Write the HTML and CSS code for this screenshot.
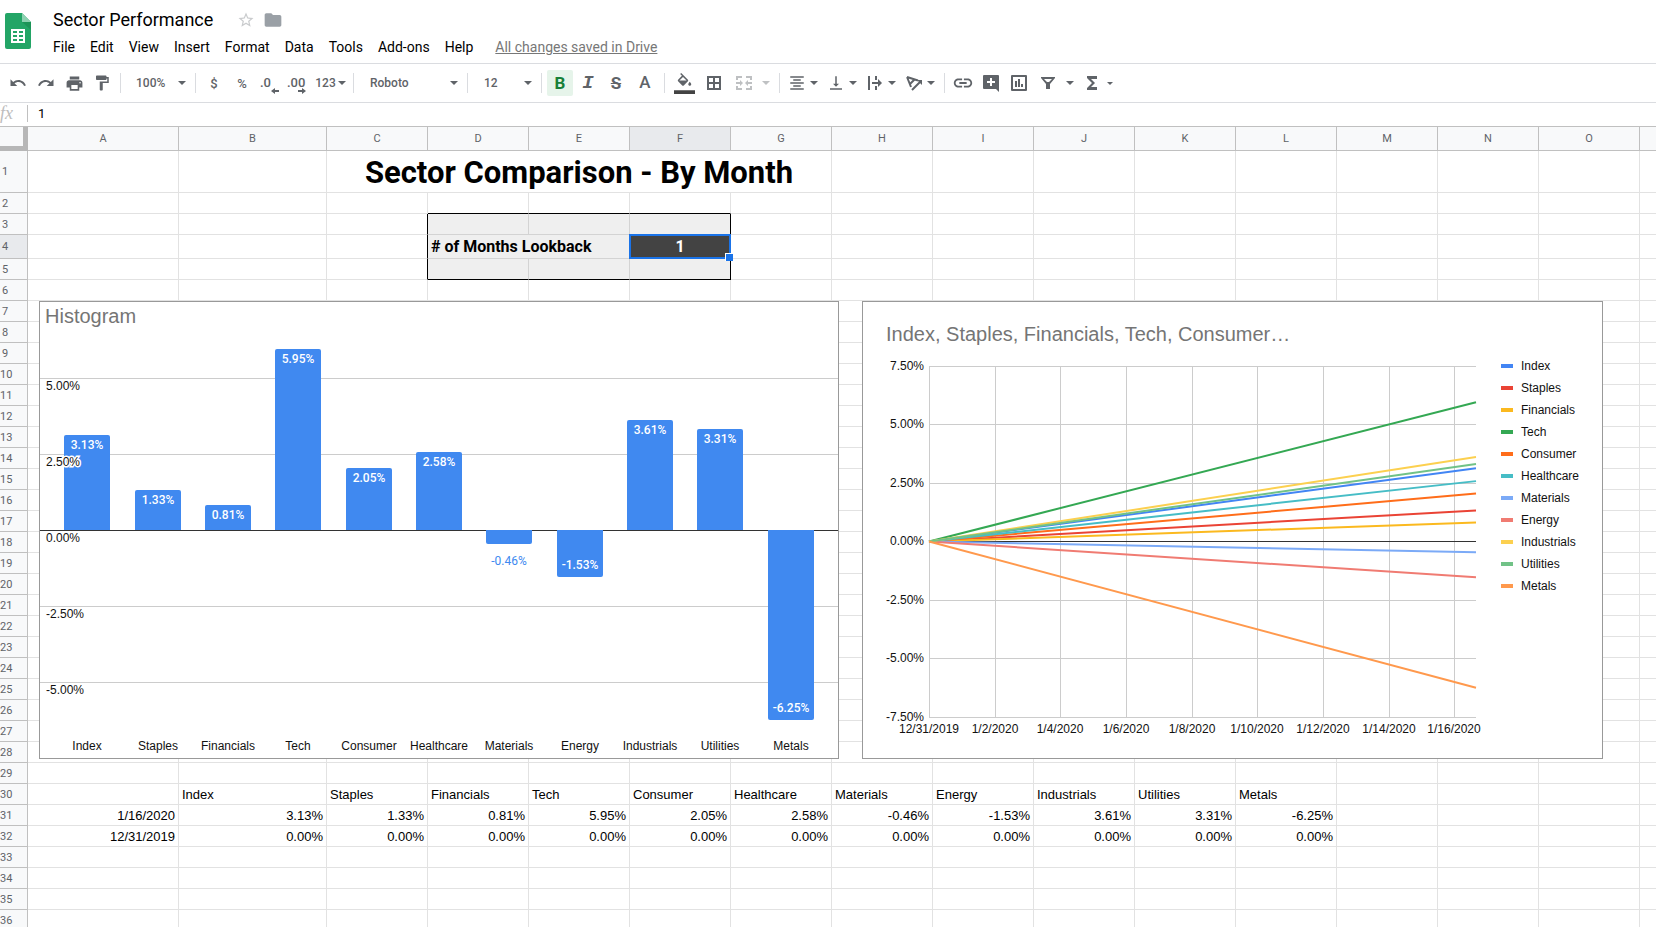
FILE: index.html
```html
<!DOCTYPE html>
<html lang="en">
<head>
    <meta charset="UTF-8">
    <meta name="viewport" content="width=device-width, initial-scale=1.0">
    <title>Sector Performance</title>
    <link rel="stylesheet" href="styles.css">
</head>
<body>
    <header class="doc-header">
        <svg class="doc-logo" viewBox="0 0 26 36" aria-hidden="true">
            <path d="M2 0h15l9 9v25a2 2 0 0 1-2 2H2a2 2 0 0 1-2-2V2a2 2 0 0 1 2-2z" fill="#23a566"/>
            <path d="M17 0l9 9h-9z" fill="#8ed1b1"/>
            <path d="M17 9h9v8z" fill="#1c9457"/>
            <path d="M6 16h14v14H6zM8 18v2h4v-2zM14 18v2h4v-2zM8 22v2h4v-2zM14 22v2h4v-2zM8 26v2h4v-2zM14 26v2h4v-2z" fill="#fff" fill-rule="evenodd"/>
        </svg>
        <div class="doc-info">
            <div class="doc-title-row">
                <h1 class="doc-title">Sector Performance</h1>
                <button class="title-btn" aria-label="Star">
                    <svg width="18" height="18" viewBox="0 0 24 24"><path fill="#c9cbcd" d="M22 9.24l-7.19-.62L12 2 9.19 8.63 2 9.24l5.46 4.73L5.82 21 12 17.27 18.18 21l-1.63-7.03L22 9.24zM12 15.4l-3.76 2.27 1-4.28-3.32-2.88 4.38-.38L12 6.1l1.71 4.04 4.38.38-3.32 2.88 1 4.28L12 15.4z"/></svg>
                </button>
                <button class="title-btn" aria-label="Move to folder">
                    <svg width="20" height="20" viewBox="0 0 24 24"><path fill="#9aa0a6" d="M10 4H4c-1.1 0-2 .9-2 2v12c0 1.1.9 2 2 2h16c1.1 0 2-.9 2-2V8c0-1.1-.9-2-2-2h-8l-2-2z"/></svg>
                </button>
            </div>
            <nav class="menu">
                <button>File</button>
                <button>Edit</button>
                <button>View</button>
                <button>Insert</button>
                <button>Format</button>
                <button>Data</button>
                <button>Tools</button>
                <button>Add-ons</button>
                <button>Help</button>
                <a class="save-state" href="#">All changes saved in Drive</a>
            </nav>
        </div>
    </header>

    <div class="toolbar" role="toolbar">
        <button class="tool" aria-label="Undo"><svg width="18" height="18" viewBox="0 0 24 24"><path d="M12.5 8c-2.65 0-5.05.99-6.9 2.6L2 7v9h9l-3.62-3.62c1.39-1.16 3.16-1.88 5.12-1.88 3.54 0 6.55 2.31 7.6 5.5l2.37-.78C21.08 11.03 17.15 8 12.5 8z"/></svg></button>
        <button class="tool" aria-label="Redo"><svg width="18" height="18" viewBox="0 0 24 24"><path d="M18.4 10.6C16.55 8.99 14.15 8 11.5 8c-4.65 0-8.58 3.03-9.96 7.22L3.9 16c1.05-3.19 4.05-5.5 7.6-5.5 1.95 0 3.73.72 5.12 1.88L13 16h9V7l-3.6 3.6z"/></svg></button>
        <button class="tool" aria-label="Print"><svg width="19" height="19" viewBox="0 0 24 24"><path d="M19 8H5c-1.66 0-3 1.34-3 3v6h4v4h12v-4h4v-6c0-1.66-1.34-3-3-3zm-3 11H8v-5h8v5zm3-7c-.55 0-1-.45-1-1s.45-1 1-1 1 .45 1 1-.45 1-1 1zm-1-9H6v4h12V3z"/></svg></button>
        <button class="tool" aria-label="Paint format"><svg width="18" height="18" viewBox="0 0 24 24"><path d="M18 4V3c0-.55-.45-1-1-1H5c-.55 0-1 .45-1 1v4c0 .55.45 1 1 1h12c.55 0 1-.45 1-1V6h1v4H9v11c0 .55.45 1 1 1h2c.55 0 1-.45 1-1v-9h8V4h-3z"/></svg></button>
        <span class="divider"></span>
        <span class="dropdown dropdown-zoom"><select aria-label="Zoom"><option>100%</option></select></span>
        <span class="divider"></span>
        <button class="tool" aria-label="Format as currency">$</button>
        <button class="tool" aria-label="Format as percent">%</button>
        <button class="tool" aria-label="Decrease decimal places">
            <svg width="24" height="24" viewBox="0 0 24 24"><text x="2" y="16">.0</text><path d="M13 20l4-3v2h4v2h-4v2z"/></svg>
        </button>
        <button class="tool" aria-label="Increase decimal places">
            <svg width="24" height="24" viewBox="0 0 24 24"><text x="1" y="16">.00</text><path d="M20 20l-4-3v2h-4v2h4v2z"/></svg>
        </button>
        <button class="tool tool-number" aria-label="More formats">123<span class="caret"></span></button>
        <span class="divider"></span>
        <span class="dropdown dropdown-font"><select aria-label="Font"><option>Roboto</option></select></span>
        <span class="divider"></span>
        <span class="dropdown dropdown-size"><select aria-label="Font size"><option>12</option></select></span>
        <span class="divider"></span>
        <button class="tool tool-bold active" aria-label="Bold">B</button>
        <button class="tool tool-italic" aria-label="Italic">I</button>
        <button class="tool tool-strike" aria-label="Strikethrough">S</button>
        <button class="tool tool-color" aria-label="Text color">A</button>
        <span class="divider"></span>
        <button class="tool tool-cell" aria-label="Fill color"><svg width="21" height="21" viewBox="0 0 28 28"><path transform="translate(2 0)" d="M16.56 8.94L7.62 0 6.21 1.41l2.38 2.38-5.15 5.15c-.59.59-.59 1.54 0 2.12l5.5 5.5c.29.29.68.44 1.06.44s.77-.15 1.06-.44l5.5-5.5c.59-.58.59-1.53 0-2.12zM5.21 10L10 5.21 14.79 10H5.21zM19 11.5s-2 2.17-2 3.5c0 1.1.9 2 2 2s2-.9 2-2c0-1.33-2-3.5-2-3.5z"/><path fill="#434343" d="M0 23h28v5H0z"/></svg></button>
        <button class="tool tool-cell" aria-label="Borders"><svg width="18" height="18" viewBox="0 0 18 18"><path d="M2 2h14v14H2zM4 4v4h4V4zM10 4v4h4V4zM4 10v4h4v-4zM10 10v4h4v-4z" fill-rule="evenodd"/></svg></button>
        <button class="tool-menu wide disabled" aria-label="Merge cells" disabled><svg width="18" height="18" viewBox="0 0 18 18"><path d="M1 2h6v2H3v2H1zM11 2h6v4h-2V4h-4zM1 12h2v2h4v2H1zM15 12h2v4h-6v-2h4zM1 8h4V6l3 3-3 3v-2H1zM17 8h-4V6l-3 3 3 3v-2h4z"/></svg><span class="caret"></span></button>
        <span class="divider"></span>
        <button class="tool-menu" aria-label="Horizontal align"><svg width="18" height="18" viewBox="0 0 24 24"><path d="M7 15v2h10v-2H7zm-4 6h18v-2H3v2zm0-8h18v-2H3v2zm4-6v2h10V7H7zM3 3v2h18V3H3z"/></svg><span class="caret"></span></button>
        <button class="tool-menu" aria-label="Vertical align"><svg width="18" height="18" viewBox="0 0 24 24"><path d="M16 13h-3V3h-2v10H8l4 4 4-4zM4 19v2h16v-2H4z"/></svg><span class="caret"></span></button>
        <button class="tool-menu" aria-label="Text wrapping"><svg width="18" height="18" viewBox="0 0 18 18"><path d="M2 2h2v14H2zM9 2h2v4H9zM9 12h2v4H9zM6 8h6V5l4 4-4 4v-3H6z"/></svg><span class="caret"></span></button>
        <button class="tool-menu" aria-label="Text rotation"><svg width="18" height="18" viewBox="0 0 18 18"><path fill="none" stroke="#5f6368" stroke-width="2" d="M2 3l11 3.500M2 3l4 10M9.500 5.500L5 10M7 16l8-8"/><path d="M12 6h5v5z"/></svg><span class="caret"></span></button>
        <span class="divider"></span>
        <button class="tool" aria-label="Insert link"><svg width="22" height="22" viewBox="0 0 24 24"><path d="M3.9 12c0-1.71 1.39-3.1 3.1-3.1h4V7H7c-2.76 0-5 2.24-5 5s2.24 5 5 5h4v-1.9H7c-1.71 0-3.1-1.39-3.1-3.1zM8 13h8v-2H8v2zm9-6h-4v1.9h4c1.71 0 3.1 1.39 3.1 3.1s-1.39 3.1-3.1 3.1h-4V17h4c2.76 0 5-2.24 5-5s-2.24-5-5-5z"/></svg></button>
        <button class="tool" aria-label="Insert comment"><svg width="18" height="18" viewBox="0 0 18 18"><path fill-rule="evenodd" d="M2 1h14a1 1 0 0 1 1 1v16l-3-3H2a1 1 0 0 1-1-1V2a1 1 0 0 1 1-1zM8 4v3H5v2h3v3h2V9h3V7h-3V4z"/></svg></button>
        <button class="tool" aria-label="Insert chart"><svg width="18" height="18" viewBox="0 0 18 18"><path fill-rule="evenodd" d="M2 1h14a1 1 0 0 1 1 1v14a1 1 0 0 1-1 1H2a1 1 0 0 1-1-1V2a1 1 0 0 1 1-1zM3 3v12h12V3zM5 7h2v6H5zM8 5h2v8H8zM11 10h2v3h-2z"/></svg></button>
        <button class="tool-menu wide" aria-label="Filter"><svg width="18" height="18" viewBox="0 0 18 18"><path fill-rule="evenodd" d="M2 3h14v1l-5 6v5H7v-5L2 4zM5 5l3 3h2l3-3z"/></svg><span class="caret"></span></button>
        <button class="tool-menu wide" aria-label="Functions"><svg width="18" height="18" viewBox="0 0 18 18"><path d="M4 2h10v3H8l4 4-4 4h6v3H4v-2l5-5-5-5z"/></svg><span class="caret small"></span></button>
    </div>

    <div class="formula-bar">
        <label class="fx" for="formula">fx</label>
        <input id="formula" type="text" value="1">
    </div>

    <main class="grid-area">
        <table class="sheet">
            <colgroup>
                <col class="col-num"><col class="col-a"><col class="col-b">
                <col span="13" class="col-std"><col>
            </colgroup>
            <thead>
                <tr id="letters"><th class="corner"></th></tr>
            </thead>
            <tbody id="rows"></tbody>
        </table>

        <figure class="chart histogram">
            <svg id="histogram" width="798" height="456" viewBox="0 0 798 456" role="img" aria-label="Histogram"></svg>
        </figure>
        <figure class="chart trend">
            <svg id="trend" width="739" height="456" viewBox="0 0 739 456" role="img" aria-label="Sector lines"></svg>
        </figure>
    </main>

    <script>
        const sectors = [
            { name: 'Index', value: 3.13, color: '#4285f4' },
            { name: 'Staples', value: 1.33, color: '#ea4335' },
            { name: 'Financials', value: 0.81, color: '#fbb91f' },
            { name: 'Tech', value: 5.95, color: '#34a853' },
            { name: 'Consumer', value: 2.05, color: '#ff6d1a' },
            { name: 'Healthcare', value: 2.58, color: '#46bdc6' },
            { name: 'Materials', value: -0.46, color: '#7baaf7' },
            { name: 'Energy', value: -1.53, color: '#f07b72' },
            { name: 'Industrials', value: 3.61, color: '#fcd04f' },
            { name: 'Utilities', value: 3.31, color: '#71c287' },
            { name: 'Metals', value: -6.25, color: '#ff994d' }
        ];
        const letters = 'ABCDEFGHIJKLMNO'.split('').concat('');
        const percent = n => n.toFixed(2) + '%';

        // Cells with content or formatting, keyed by address
        const cells = {
            C1: { text: 'Sector Comparison - By Month', cls: 'heading', span: 5 },
            D4: { text: '# of Months Lookback', cls: 'boxed', span: 2 },
            F4: { text: '1', cls: 'boxed selected' },
            A31: { text: '1/16/2020', cls: 'num' },
            A32: { text: '12/31/2019', cls: 'num' }
        };
        ['D2', 'E2', 'F2'].forEach(a => cells[a] = { cls: 'line-bottom' });
        ['C3', 'C4', 'C5'].forEach(a => cells[a] = { cls: 'line-right' });
        ['D3', 'E3', 'F3'].forEach(a => cells[a] = { cls: 'boxed' });
        ['D5', 'E5', 'F5'].forEach(a => cells[a] = { cls: 'boxed line-bottom' });
        ['F3', 'F4', 'F5'].forEach(a => cells[a].cls += ' line-right');
        sectors.forEach((s, i) => {
            const col = letters[i + 1];
            cells[col + 30] = { text: s.name };
            cells[col + 31] = { text: percent(s.value), cls: 'num' };
            cells[col + 32] = { text: '0.00%', cls: 'num' };
        });

        document.getElementById('letters').innerHTML += letters
            .map(l => `<th scope="col"${l === 'F' ? ' class="current"' : ''}>${l}</th>`).join('');

        let rows = '';
        for (let r = 1; r <= 36; r++) {
            rows += `<tr class="row-${r}"><th scope="row"${r === 4 ? ' class="current"' : ''}>${r}</th>`;
            for (let c = 0; c < letters.length; c++) {
                const cell = cells[letters[c] + r] || {};
                const span = cell.span || 1;
                const handle = letters[c] + r === 'F4' ? '<span class="selection"></span>' : '';
                rows += `<td${cell.cls ? ` class="${cell.cls}"` : ''}${span > 1 ? ` colspan="${span}"` : ''}>${cell.text || ''}${handle}</td>`;
                c += span - 1;
            }
            rows += '</tr>';
        }
        document.getElementById('rows').innerHTML = rows;

        // Histogram
        const zero = 228;
        const barW = 46;
        let bars = '<text class="chart-title" x="5" y="21">Histogram</text>';
        [5, 2.5, 0, -2.5, -5].forEach(v => {
            const y = zero - v * 30.4;
            bars += `<rect class="${v ? 'gridline' : 'baseline'}" x="0" y="${Math.round(y)}" width="798" height="1"/>`;
        });
        sectors.forEach((s, i) => {
            const x = Math.round(24.25 + i * 70.36);
            const end = Math.round(zero - s.value * 30.4);
            const mid = x + barW / 2;
            // rounded at the value end only
            const k = s.value > 0 ? 2 : -2;
            bars += `<path class="bar" d="M${x} ${zero}V${end + k}Q${x} ${end} ${x + 2} ${end}H${x + barW - 2}Q${x + barW} ${end} ${x + barW} ${end + k}V${zero}z"/>`;
            const inside = Math.abs(end - zero) > 20;
            const labelY = s.value > 0 ? end + 14 : inside ? end - 8 : end + 21;
            bars += `<text class="bar-label${inside ? '' : ' outside'}" x="${mid}" y="${labelY}">${percent(s.value)}</text>`;
            bars += `<text class="axis middle" x="${mid}" y="448">${s.name}</text>`;
        });
        [5, 2.5, 0, -2.5, -5].forEach(v => {
            bars += `<text class="axis halo" x="6" y="${zero - v * 30.4 + 12}">${percent(v)}</text>`;
        });
        document.getElementById('histogram').innerHTML = bars;

        // Line chart
        const left = 66, right = 613, mid0 = 239.5, unit = 23.4;
        const dates = ['12/31/2019', '1/2/2020', '1/4/2020', '1/6/2020', '1/8/2020', '1/10/2020', '1/12/2020', '1/14/2020', '1/16/2020'];
        let plot = '<text class="chart-title" x="23" y="39">Index, Staples, Financials, Tech, Consumer…</text>';
        dates.forEach((d, i) => {
            const x = Math.round(left + i * 65.65);
            plot += `<rect class="gridline" x="${x}" y="64" width="1" height="352"/>`;
            plot += `<text class="axis middle" x="${x}" y="431">${d}</text>`;
        });
        [7.5, 5, 2.5, 0, -2.5, -5, -7.5].forEach(v => {
            const y = Math.floor(mid0 - v * unit);
            plot += `<rect class="${v ? 'gridline' : 'baseline'}" x="${left}" y="${y}" width="${right - left}" height="1"/>`;
            plot += `<text class="axis end" x="61" y="${y + 4}">${percent(v)}</text>`;
        });
        sectors.forEach((s, i) => {
            const y = 62 + i * 22;
            plot += `<path class="series" stroke="${s.color}" d="M${left} ${mid0}L${right} ${mid0 - s.value * unit}"/>`;
            plot += `<rect x="638" y="${y}" width="12" height="4" fill="${s.color}"/>`;
            plot += `<text class="axis" x="658" y="${y + 6}">${s.name}</text>`;
        });
        document.getElementById('trend').innerHTML = plot;
    </script>
</body>
</html>
```
FILE: styles.css
```css
* {
    box-sizing: border-box;
}

body {
    margin: 0;
    height: 100vh;
    display: flex;
    flex-direction: column;
    overflow: hidden;
    background-color: #fff;
    font-family: Roboto, "Liberation Sans", sans-serif;
    color: #000;
}

button {
    border: none;
    background: none;
    padding: 0;
    font-family: inherit;
    cursor: pointer;
}

/* Header */
.doc-header {
    display: flex;
    flex: none;
    height: 64px;
    padding-left: 5px;
    border-bottom: 1px solid #dadce0;
}

.doc-logo {
    width: 26px;
    height: 36px;
    margin-top: 13px;
}

.doc-info {
    margin-left: 22px;
    padding-top: 8px;
}

.doc-title-row {
    display: flex;
    align-items: center;
    height: 24px;
}

.doc-title {
    margin: 0 20px 0 0;
    font-size: 18px;
    font-weight: 400;
    line-height: 24px;
}

.title-btn {
    display: flex;
    padding: 0 4px;
}

.menu {
    display: flex;
    align-items: center;
    gap: 15px;
    height: 30px;
}

.menu button,
.save-state {
    font-size: 14px;
    line-height: 20px;
    color: #000;
    white-space: nowrap;
}

.menu .save-state {
    margin-left: 7px;
    color: #777;
    text-decoration: underline;
}

/* Toolbar */
.toolbar {
    display: flex;
    flex: none;
    align-items: center;
    height: 39px;
    padding-left: 4px;
    border-bottom: 1px solid #dadce0;
    color: #5f6368;
}

.toolbar svg {
    fill: #5f6368;
    flex: none;
}

.toolbar svg text {
    font-size: 13px;
    font-weight: 500;
}

.tool,
.tool-menu {
    display: flex;
    align-items: center;
    flex: none;
    height: 26px;
    color: #5f6368;
    font-size: 13px;
    font-weight: 500;
}

.tool {
    justify-content: center;
    width: 28px;
}

.tool-number {
    width: 37px;
    gap: 2px;
    font-size: 12px;
}

.tool-bold,
.tool-strike,
.tool-color,
.tool-italic {
    font-size: 17px;
    font-weight: 700;
}

.tool-bold.active {
    width: 26px;
    margin: 0 1px;
    border-radius: 2px;
    background-color: #e6f4ea;
    color: #188038;
}

.tool-italic {
    font-family: "Liberation Mono", monospace;
    font-style: italic;
    font-size: 19px;
}

.tool-strike {
    text-decoration: line-through;
}

.tool-color {
    width: 30px;
    font-weight: 500;
    padding-bottom: 3px;
}

.tool-cell {
    width: 30px;
}

.tool-menu {
    width: 39px;
    padding-left: 4px;
    gap: 4px;
}

.tool-menu.wide {
    width: 44px;
    padding-left: 6px;
    gap: 9px;
}

.tool-menu.disabled {
    width: 46px;
    opacity: 0.4;
}

.caret,
.dropdown::after {
    content: "";
    flex: none;
    border: 4px solid transparent;
    border-top-color: #5f6368;
    border-bottom: none;
}

.caret.small {
    margin-left: -3px;
    border-width: 3px;
    border-bottom: none;
}

.divider {
    flex: none;
    width: 1px;
    height: 20px;
    margin: 0 4px;
    background-color: #dadce0;
}

.dropdown {
    display: flex;
    flex: none;
    align-items: center;
    padding: 0 5px 0 12px;
}

.dropdown-zoom {
    width: 66px;
    padding-left: 11px;
}

.dropdown-font {
    width: 105px;
}

.dropdown-size {
    width: 65px;
}

.dropdown select {
    flex: 1;
    min-width: 0;
    padding: 0;
    border: none;
    appearance: none;
    background: none;
    color: #5f6368;
    font-family: inherit;
    font-size: 12px;
    font-weight: 500;
}

/* Formula bar */
.formula-bar {
    display: flex;
    flex: none;
    align-items: center;
    height: 23px;
    padding-bottom: 2px;
}

.fx {
    width: 28px;
    border-right: 1px solid #c0c0c0;
    font-family: "Liberation Serif", serif;
    font-size: 18px;
    font-style: italic;
    line-height: 17px;
    color: #bdbdbd;
}

.formula-bar input {
    flex: 1;
    border: none;
    outline: none;
    padding: 0 10px;
    font-family: inherit;
    font-size: 13px;
}

/* Sheet */
.grid-area {
    position: relative;
    flex: 1;
    min-height: 0;
    overflow: hidden;
    border-top: 1px solid #c0c0c0;
}

.sheet {
    width: 100%;
    min-width: 1640px;
    table-layout: fixed;
    border-collapse: separate;
    border-spacing: 0;
}

.col-num {
    width: 28px;
}

.col-a {
    width: 151px;
}

.col-b {
    width: 148px;
}

.col-std {
    width: 101px;
}

.sheet th {
    padding: 0;
    border-right: 1px solid #c0c0c0;
    border-bottom: 1px solid #c0c0c0;
    background-color: #f8f9fa;
    color: #5f6368;
    font-size: 11px;
    font-weight: 400;
    line-height: 14px;
}

.sheet thead th {
    height: 24px;
}

.sheet tbody th {
    padding: 1px 17px 0 0;
}

.sheet th.current {
    background-color: #e8eaed;
}

.sheet th.corner {
    border-right: 5px solid #b7b7b7;
    border-bottom: 5px solid #b7b7b7;
}

.sheet td {
    height: 21px;
    padding: 0 3px 2px;
    border-right: 1px solid #e2e2e2;
    border-bottom: 1px solid #e2e2e2;
    vertical-align: bottom;
    font-family: "Liberation Sans", Arial, sans-serif;
    font-size: 13px;
    line-height: 15px;
    white-space: nowrap;
}

.sheet tr > :last-child {
    border-right: none;
}

.sheet .row-1 td {
    height: 42px;
}

.sheet .row-4 td {
    height: 24px;
}

.sheet .num {
    text-align: right;
}

.sheet .heading {
    padding-bottom: 0;
    font-family: Roboto, sans-serif;
    font-size: 31px;
    font-weight: 700;
    line-height: 38px;
    text-align: center;
}

.sheet .boxed {
    background-color: #efefef;
    border-color: #d3d3d3;
    font-family: Roboto, sans-serif;
    font-size: 16px;
    font-weight: 700;
    line-height: 19px;
}

.sheet .selected {
    position: relative;
    background-color: #434343;
    color: #fff;
    text-align: center;
}

.sheet .line-right {
    border-right-color: #000;
}

.sheet .line-bottom {
    border-bottom-color: #000;
}

.selection {
    position: absolute;
    inset: -1px;
    border: 2px solid #1a73e8;
}

.selection::after {
    content: "";
    position: absolute;
    right: -4px;
    bottom: -4px;
    width: 7px;
    height: 7px;
    border: 1px solid #fff;
    border-right: none;
    border-bottom: none;
    background-color: #1a73e8;
}

/* Charts float over the cells */
.chart {
    position: absolute;
    top: 174px;
    margin: 0;
    border: 1px solid #999;
    background-color: #fff;
}

.chart svg {
    display: block;
}

.histogram {
    left: 39px;
}

.trend {
    left: 862px;
}

.chart text {
    font-family: "Liberation Sans", Arial, sans-serif;
    font-size: 12px;
    fill: #111;
}

.chart .chart-title {
    font-size: 20px;
    fill: #757575;
}

.gridline {
    fill: #ccc;
}

.baseline {
    fill: #333;
}

.bar {
    fill: #4089f0;
}

.chart .bar-label {
    font-family: Roboto, sans-serif;
    font-weight: 500;
    fill: #fff;
    text-anchor: middle;
}

.chart .bar-label.outside {
    font-weight: 400;
    fill: #4089f0;
}

.halo {
    stroke: #fff;
    stroke-width: 3px;
    paint-order: stroke;
}

.middle {
    text-anchor: middle;
}

.end {
    text-anchor: end;
}

.series {
    fill: none;
    stroke-width: 2px;
}
```
